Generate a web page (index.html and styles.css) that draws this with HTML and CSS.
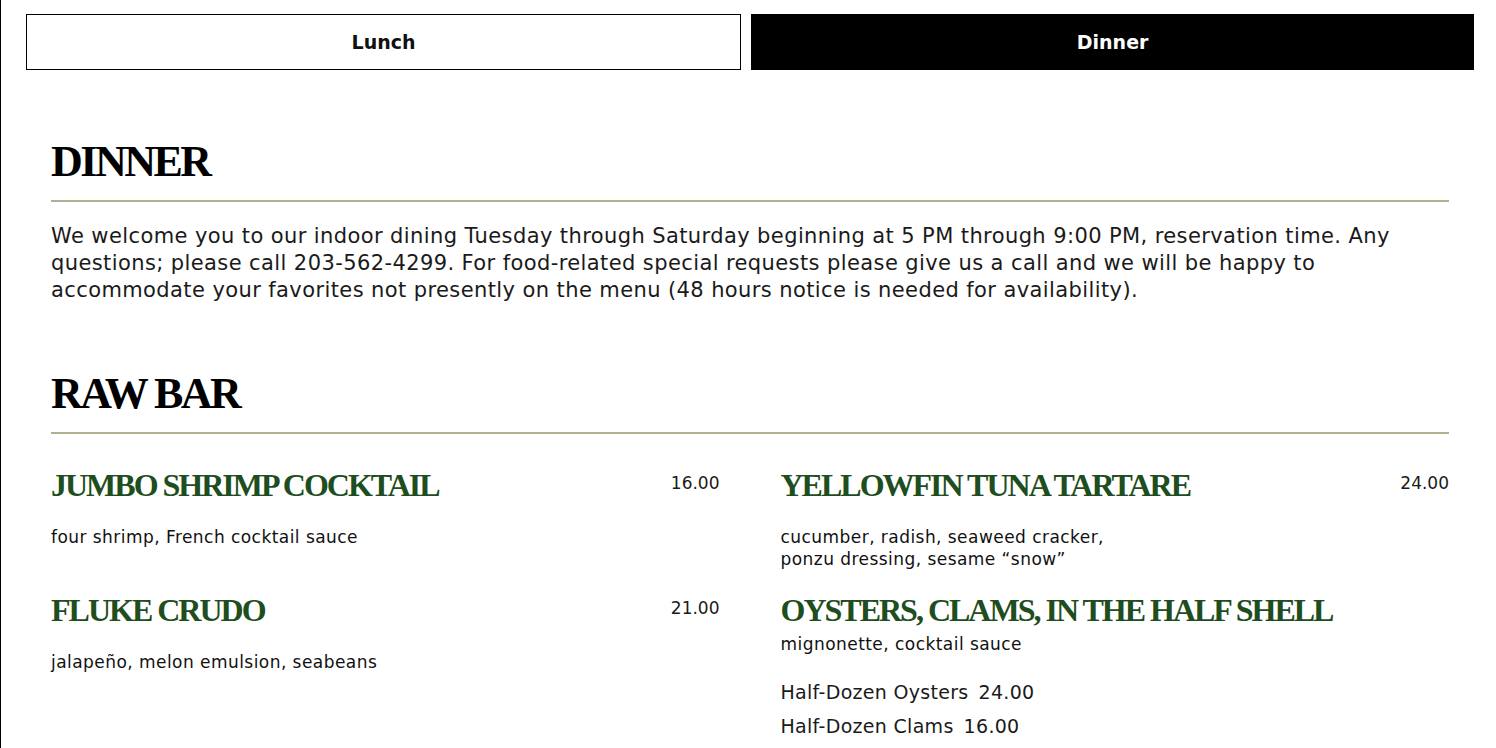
FILE: index.html
```html
<!DOCTYPE html>
<html lang="en">
<head>
<meta charset="utf-8">
<title>Dinner Menu</title>
<link rel="stylesheet" href="styles.css">
</head>
<body>
<div class="page">
  <nav class="tabs">
    <button class="tab">Lunch</button>
    <button class="tab tab-active">Dinner</button>
  </nav>
  <main class="menu">
    <section class="section">
      <h2 class="section-title">DINNER</h2>
      <p class="intro">We welcome you to our indoor dining Tuesday through Saturday beginning at 5 PM through 9:00 PM, reservation time. Any questions; please call 203-562-4299. For food-related special requests please give us a call and we will be happy to accommodate your favorites not presently on the menu (48 hours notice is needed for availability).</p>
    </section>
    <section class="section section-raw">
      <h2 class="section-title">RAW BAR</h2>
      <div class="items">
        <div class="item">
          <div class="item-head">
            <h3 class="item-name">JUMBO SHRIMP COCKTAIL</h3>
            <span class="item-price">16.00</span>
          </div>
          <p class="item-desc">four shrimp, French cocktail sauce</p>
        </div>
        <div class="item">
          <div class="item-head">
            <h3 class="item-name">YELLOWFIN TUNA TARTARE</h3>
            <span class="item-price">24.00</span>
          </div>
          <p class="item-desc">cucumber, radish, seaweed cracker,<br>ponzu dressing, sesame “snow”</p>
        </div>
        <div class="item">
          <div class="item-head">
            <h3 class="item-name">FLUKE CRUDO</h3>
            <span class="item-price">21.00</span>
          </div>
          <p class="item-desc">jalapeño, melon emulsion, seabeans</p>
        </div>
        <div class="item">
          <div class="item-head">
            <h3 class="item-name">OYSTERS, CLAMS, IN THE HALF SHELL</h3>
          </div>
          <p class="item-desc item-desc-tight">mignonette, cocktail sauce</p>
          <ul class="options">
            <li class="option">Half-Dozen Oysters<span class="option-price">24.00</span></li>
            <li class="option">Half-Dozen Clams<span class="option-price">16.00</span></li>
          </ul>
        </div>
      </div>
    </section>
  </main>
</div>
</body>
</html>
```

FILE: styles.css
```css
* {
  box-sizing: border-box;
}

html, body {
  margin: 0;
  padding: 0;
  background: #ffffff;
}

body {
  font-family: "DejaVu Sans", "Noto Sans", sans-serif;
  color: #1a1a1a;
}

.page {
  min-height: 100vh;
  border-left: 1px solid #000000;
  overflow: hidden;
}

.tabs {
  display: flex;
  gap: 10px;
  padding: 14px 22px 0 25px;
}

.tab {
  flex: 1 1 auto;
  height: 56px;
  border: 1px solid #000000;
  background: #ffffff;
  color: #111111;
  font-family: "DejaVu Sans", sans-serif;
  font-weight: 700;
  font-size: 19px;
  cursor: pointer;
  padding: 0 10px;
}

.tab-active {
  background: #000000;
  color: #ffffff;
}

.menu {
  padding: 0 47px 0 50px;
}

.section-title {
  margin: 0;
  font-family: "Liberation Serif", "Times New Roman", serif;
  font-weight: 700;
  font-size: 44px;
  line-height: 53px;
  letter-spacing: -2.5px;
  color: #000000;
  padding-bottom: 12px;
  border-bottom: 2px solid #b3b08f;
}

.section {
  padding-top: 65px;
}

.section-raw {
  padding-top: 63px;
}

.intro {
  margin: 21px 0 0;
  font-size: 21px;
  line-height: 27px;
  letter-spacing: 0.4px;
  color: #1a1a1a;
}

.items {
  display: grid;
  grid-template-columns: 1fr 1fr;
  column-gap: 61px;
  padding-top: 32px;
}

.item {
  margin-bottom: 21px;
}

.item-head {
  display: flex;
  justify-content: space-between;
  align-items: flex-start;
  gap: 20px;
}

.item-name {
  margin: 0;
  font-family: "Liberation Serif", "Times New Roman", serif;
  font-weight: 700;
  font-size: 32px;
  line-height: 38px;
  letter-spacing: -2px;
  color: #1e4d20;
}

.item-price {
  font-size: 17px;
  line-height: 27px;
  margin-top: 4px;
  color: #1a1a1a;
}

.item-desc {
  margin: 22px 0 0;
  font-size: 17px;
  line-height: 22px;
  letter-spacing: 0.45px;
  color: #111111;
}

.item-desc-tight {
  margin-top: 4px;
}

.options {
  list-style: none;
  margin: 20px 0 0;
  padding: 0;
}

.option {
  font-size: 19px;
  line-height: 34px;
  letter-spacing: 0.3px;
  color: #1a1a1a;
}

.option-price {
  margin-left: 10px;
}
```
